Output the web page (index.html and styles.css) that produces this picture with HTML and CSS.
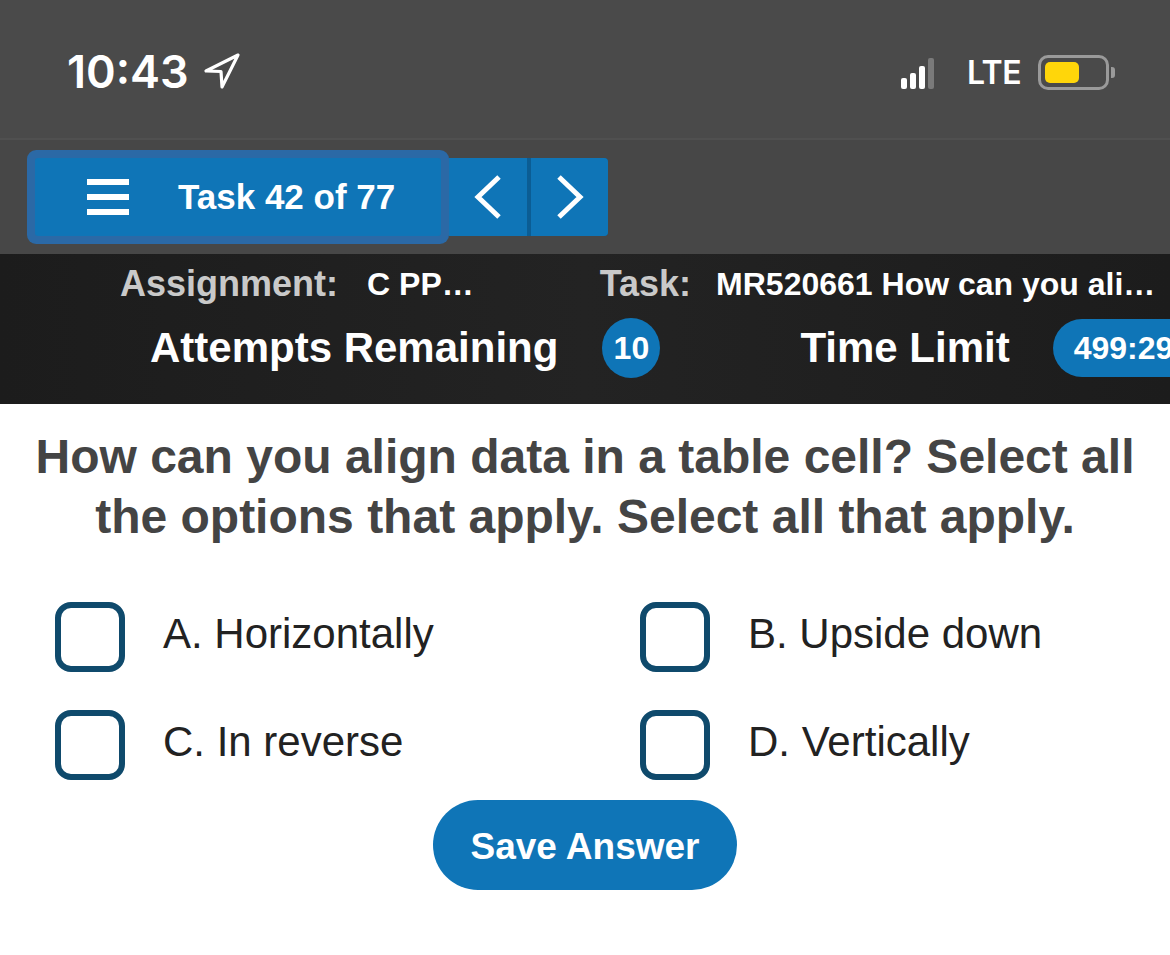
FILE: index.html
```html
<!DOCTYPE html>
<html>
<head>
<meta charset="utf-8">
<link rel="stylesheet" href="styles.css">
</head>
<body>
<div class="page">
  <div class="status">
    <div class="status-left">
      <span class="clock">10:43</span>
      <svg class="loc" width="38" height="36" viewBox="0 0 38 36"><path d="M35 2 L3 18 L18 18.5 L19 34 Z" fill="none" stroke="#fff" stroke-width="3.2" stroke-linejoin="round"/></svg>
    </div>
    <div class="status-right">
      <div class="signal">
        <span class="bar b1"></span><span class="bar b2"></span><span class="bar b3"></span><span class="bar b4"></span>
      </div>
      <span class="lte">LTE</span>
      <div class="battery"><div class="battery-fill"></div></div>
      <div class="battery-nub"></div>
    </div>
  </div>
  <div class="navarea">
    <div class="nav">
      <div class="task-btn">
        <div class="burger"><span></span><span></span><span></span></div>
        <span class="task-label">Task 42 of 77</span>
      </div>
      <div class="arrows">
        <div class="arrow-btn prev"><svg width="30" height="46" viewBox="0 0 30 46"><polyline points="26,3 5,23 26,43" fill="none" stroke="#fff" stroke-width="5"/></svg></div>
        <div class="arrow-btn next"><svg width="30" height="46" viewBox="0 0 30 46"><polyline points="4,3 25,23 4,43" fill="none" stroke="#fff" stroke-width="5"/></svg></div>
      </div>
    </div>
  </div>
  <div class="infobar">
    <div class="info-row1">
      <span class="lbl">Assignment:</span>
      <span class="val v-assign">C PP…</span>
      <span class="lbl l-task">Task:</span>
      <span class="val v-task">MR520661 How can you ali…</span>
    </div>
    <div class="info-row2">
      <span class="big">Attempts Remaining</span>
      <span class="badge">10</span>
      <span class="big l-time">Time Limit</span>
      <span class="pill">499:29</span>
    </div>
  </div>
  <div class="content">
    <h1 class="question">How can you align data in a table cell? Select all the options that apply. Select all that apply.</h1>
    <div class="options">
      <div class="option"><span class="box"></span><span class="opt-text">A. Horizontally</span></div>
      <div class="option"><span class="box"></span><span class="opt-text">B. Upside down</span></div>
      <div class="option"><span class="box"></span><span class="opt-text">C. In reverse</span></div>
      <div class="option"><span class="box"></span><span class="opt-text">D. Vertically</span></div>
    </div>
    <div class="actions"><button class="save">Save Answer</button></div>
  </div>
</div>
</body>
</html>
```
FILE: styles.css
```css
html, body { margin: 0; padding: 0; background: #fff; }
body { width: 1170px; height: 955px; overflow: hidden; font-family: "Liberation Sans", Arial, sans-serif; }
.page { width: 1170px; }

.status {
  height: 138px;
  background: #4a4a4a;
  border-bottom: 2px solid #505050;
  display: flex;
  align-items: center;
  justify-content: space-between;
  padding: 0 0 0 67px;
  box-sizing: content-box;
}
.status-left { display: flex; align-items: center; margin-top: 4px; }
.clock { font-family: "Inter", sans-serif; font-weight: 600; font-size: 45px; color: #fff; letter-spacing: 0px; }
.loc { margin-left: 14px; margin-top: 0px; }
.status-right { display: flex; align-items: center; margin-right: 55px; margin-top: 7px; }
.signal { display: flex; align-items: flex-end; gap: 3px; height: 32px; }
.bar { width: 6px; background: #fff; border-radius: 2px; }
.b1 { height: 11px; }
.b2 { height: 16px; }
.b3 { height: 23px; }
.b4 { height: 31px; background: #7a7a7a; }
.lte { font-family: "Inter", sans-serif; font-weight: 600; font-size: 32px; color: #fff; margin-left: 33px; letter-spacing: -0.5px; }
.battery {
  width: 61px; height: 29px; margin-left: 17px;
  border: 3px solid #9a9a9a; border-radius: 10px;
  display: flex; align-items: center; padding-left: 4px;
}
.battery-fill { width: 34px; height: 21px; background: #ffd60a; border-radius: 5px; }
.battery-nub { width: 4px; height: 11px; background: #9a9a9a; border-radius: 0 3px 3px 0; margin-left: 2px; }

.navarea { height: 114px; background: #474747; }
.nav { display: flex; padding: 18px 0 0 35px; }
.task-btn {
  width: 406px; height: 78px; background: #0f75b7;
  box-shadow: 0 0 0 8px #2b69a6;
  border-radius: 3px;
  display: flex; align-items: center;
}
.burger { display: flex; flex-direction: column; gap: 9px; margin-left: 52px; }
.burger span { display: block; width: 42px; height: 6px; background: #fff; }
.task-label { font-weight: 700; font-size: 35px; color: #fff; margin-left: 49px; }
.arrows { display: flex; margin-left: 8px; background: #0b5d94; border-radius: 0 4px 4px 0; gap: 4px; }
.arrow-btn { height: 78px; background: #0f75b7; display: flex; align-items: center; justify-content: center; }
.prev { width: 78px; }
.next { width: 77px; border-radius: 0 4px 4px 0; }

.infobar {
  height: 150px;
  background: linear-gradient(90deg, #1c1c1c 0%, #232323 50%, #1c1c1c 100%);
  color: #fff;
  overflow: hidden;
  white-space: nowrap;
}
.info-row1 { height: 60px; display: flex; align-items: center; padding-left: 120px; font-weight: 700; }
.lbl { font-size: 36px; color: #c9c9c9; flex: none; }
.val { font-size: 32px; color: #fff; flex: none; }
.v-assign { margin-left: 29px; }
.l-task { margin-left: 126px; }
.v-task { margin-left: 25px; }
.info-row2 { height: 60px; margin-top: 4px; display: flex; align-items: center; padding-left: 150px; font-weight: 700; }
.big { font-size: 42px; color: #fff; flex: none; }
.badge {
  width: 58px; height: 60px; border-radius: 50%; flex: none;
  background: #0f75b7; color: #fff; font-size: 32px;
  display: flex; align-items: center; justify-content: center;
  margin-left: 44px;
}
.l-time { margin-left: 140px; }
.pill {
  height: 58px; width: 160px; flex: none;
  border-radius: 29px; background: #0f75b7; color: #fff; font-size: 32px;
  display: flex; align-items: center; padding-left: 21px; box-sizing: border-box;
  margin-left: 43px;
}

.content { padding-top: 23px; }
.question {
  margin: 0; padding: 0 20px;
  text-align: center; font-size: 48px; line-height: 60px; font-weight: 700; color: #444;
}
.options { display: grid; grid-template-columns: 585px 585px; row-gap: 38px; margin-top: 55px; }
.option { display: flex; align-items: center; padding-left: 55px; }
.box {
  width: 70px; height: 70px; box-sizing: border-box;
  border: 6px solid #0f4a6c; border-radius: 16px; flex: none;
}
.opt-text { font-size: 42px; color: #222; margin-left: 38px; margin-top: -6px; }
.actions { display: flex; justify-content: center; margin-top: 20px; }
.save {
  width: 304px; height: 90px; border: none; border-radius: 45px;
  background: #0f75b7; color: #fff;
  font-family: "Liberation Sans", Arial, sans-serif; font-weight: 700; font-size: 37px;
  padding: 4px 0 0 0;
}
```
